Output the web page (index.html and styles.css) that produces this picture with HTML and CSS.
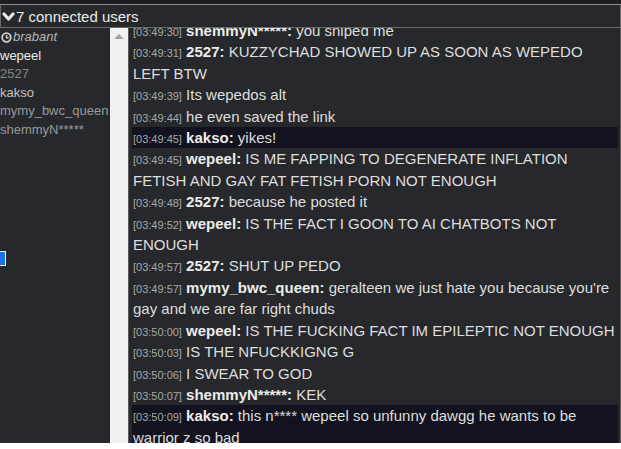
FILE: index.html
```html
<!DOCTYPE html>
<html lang="en">
<head>
  <meta charset="UTF-8" />
  <meta name="viewport" content="width=device-width, initial-scale=1.0" />
  <title>Chat</title>
  <link rel="stylesheet" href="styles.css">
</head>
<body>

  <div class="app">
    <div class="topline"></div>

    <div class="header">
      <svg class="chevron" width="13" height="11" viewBox="0 0 13 11">
        <path d="M2 3 L6.5 8 L11 3" fill="none" stroke="#e8e8e8" stroke-width="3.2" stroke-linecap="round" stroke-linejoin="round"/>
      </svg>
      <span>7 connected users</span>
    </div>

    <div class="main">
      <ul class="users">
        <li class="u-away">
          <svg class="clock" width="11" height="11" viewBox="0 0 11 11">
            <circle cx="5.5" cy="5.5" r="4.3" fill="none" stroke="#d0d0d0" stroke-width="1.8"/>
            <path d="M5.5 3 V5.7 H7.6" fill="none" stroke="#d0d0d0" stroke-width="1.4"/>
          </svg>brabant
        </li>
        <li class="u-bright">wepeel</li>
        <li class="u-dim">2527</li>
        <li class="u-mid">kakso</li>
        <li class="u-soft">mymy_bwc_queen</li>
        <li class="u-soft">shemmyN*****</li>
      </ul>

      <div class="scrollbar">
        <span class="arrow-up"></span>
      </div>

      <div class="chat">
        <div class="log">
          <div class="msg"><span class="ts">[03:49:30]</span> <b>shemmyN*****:</b> you sniped me</div>
          <div class="msg"><span class="ts">[03:49:31]</span> <b>2527:</b> KUZZYCHAD SHOWED UP AS SOON AS WEPEDO LEFT BTW</div>
          <div class="msg"><span class="ts">[03:49:39]</span> Its wepedos alt</div>
          <div class="msg"><span class="ts">[03:49:44]</span> he even saved the link</div>
          <div class="msg hl"><span class="ts">[03:49:45]</span> <b>kakso:</b> yikes!</div>
          <div class="msg"><span class="ts">[03:49:45]</span> <b>wepeel:</b> IS ME FAPPING TO DEGENERATE INFLATION FETISH AND GAY FAT FETISH PORN NOT ENOUGH</div>
          <div class="msg"><span class="ts">[03:49:48]</span> <b>2527:</b> because he posted it</div>
          <div class="msg"><span class="ts">[03:49:52]</span> <b>wepeel:</b> IS THE FACT I GOON TO AI CHATBOTS NOT ENOUGH</div>
          <div class="msg"><span class="ts">[03:49:57]</span> <b>2527:</b> SHUT UP PEDO</div>
          <div class="msg"><span class="ts">[03:49:57]</span> <b>mymy_bwc_queen:</b> geralteen we just hate you because you're gay and we are far right chuds</div>
          <div class="msg"><span class="ts">[03:50:00]</span> <b>wepeel:</b> IS THE FUCKING FACT IM EPILEPTIC NOT ENOUGH</div>
          <div class="msg"><span class="ts">[03:50:03]</span> IS THE NFUCKKIGNG G</div>
          <div class="msg"><span class="ts">[03:50:06]</span> I SWEAR TO GOD</div>
          <div class="msg"><span class="ts">[03:50:07]</span> <b>shemmyN*****:</b> KEK</div>
          <div class="msg hl"><span class="ts">[03:50:09]</span> <b>kakso:</b> this n**** wepeel so unfunny dawgg he wants to be warrior z so bad</div>
        </div>
      </div>
    </div>

    <span class="blue-box"></span>
  </div>

</body>
</html>
```

FILE: styles.css
```css
body {
  margin: 0;
  background-color: #fff;
  font-family: "Liberation Sans", Arial, sans-serif;
}

.app {
  position: relative;
  height: 443px;
  background-color: #26282c;
  display: flex;
  flex-direction: column;
  overflow: hidden;
}

.topline {
  height: 4px;
  background-color: #1d1e21;
  border-bottom: 1px solid #8c8c8c;
}

.header {
  height: 22px;
  display: flex;
  align-items: center;
  gap: 1px;
  padding-left: 1px;
  border-left: 1px solid #6a6a6a;
  border-right: 1px solid #6a6a6a;
  border-bottom: 1px solid #6a6a6a;
  color: #ececec;
  font-size: 15px;
}

.chevron {
  display: block;
}

.main {
  flex: 1;
  display: flex;
  min-height: 0;
}

.users {
  width: 110px;
  margin: 0;
  padding: 0;
  list-style: none;
  font-size: 13px;
  line-height: 18.6px;
}

.users li {
  white-space: nowrap;
  overflow: hidden;
}

.u-away {
  color: #b4b4b4;
  font-style: italic;
  display: flex;
  align-items: center;
  gap: 1px;
  padding-left: 1px;
}

.clock {
  display: block;
}

.u-bright { color: #ececec; }
.u-dim { color: #868686; }
.u-mid { color: #c2c2c2; }
.u-soft { color: #9a9a9a; }

.scrollbar {
  width: 18px;
  background-color: #f1f1f1;
  display: flex;
  justify-content: center;
  padding-top: 6px;
}

.arrow-up {
  width: 0;
  height: 0;
  border-left: 5px solid transparent;
  border-right: 5px solid transparent;
  border-bottom: 5px solid #a3a3a3;
}

.chat {
  width: 486px;
  border-left: 1px solid #5a5a5a;
  border-right: 1px solid #5a5a5a;
  background-color: #26282c;
  overflow: hidden;
  padding: 0 2px 0 3px;
}

.log {
  margin-top: -8px;
}

.msg {
  font-size: 15px;
  line-height: 21.4px;
  color: #dedede;
  padding-left: 1px;
}

.msg b {
  color: #ececec;
}

.ts {
  font-size: 11px;
  line-height: 1;
  color: #a8a8a8;
}

.hl {
  background-color: #13131f;
}

.blue-box {
  position: absolute;
  left: -10px;
  top: 251px;
  width: 14px;
  height: 13px;
  background-color: #1a73e8;
  border: 1px solid #f0f0f0;
}
```
